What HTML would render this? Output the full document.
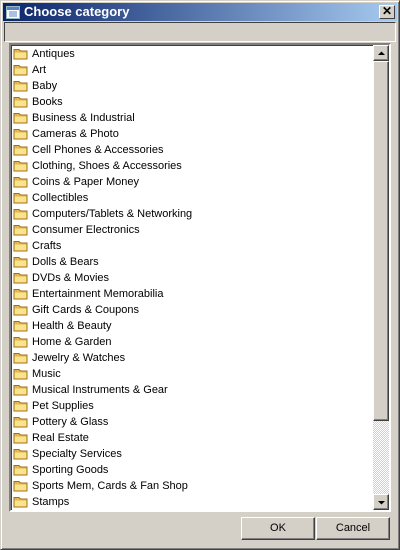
<!DOCTYPE html>
<html><head><style>
*{margin:0;padding:0;box-sizing:border-box}
body{width:400px;height:550px;background:#d4d0c8;font-family:"Liberation Sans",sans-serif;font-size:11px;position:relative;overflow:hidden}
.win{position:absolute;left:0;top:0;width:400px;height:550px;border:1px solid #d4d0c8;border-right-color:#404040;border-bottom-color:#404040;box-shadow:inset 1px 1px #fff,inset -1px -1px #808080}
.title{position:absolute;left:3px;top:3px;width:394px;height:18px;background:linear-gradient(to right,#0a246a,#a6caf0);color:#fff;font-weight:bold;font-size:13px;line-height:18px;padding-left:21px;font-family:"Liberation Sans",sans-serif}
.close{position:absolute;right:5px;top:5px;width:16px;height:14px;background:#d4d0c8;border:1px solid;border-color:#fff #404040 #404040 #fff;font-size:12px;line-height:11px;text-align:center;color:#000;font-weight:bold}
.field{position:absolute;left:4px;top:22px;width:392px;height:20px;border:1px solid;border-color:#404040 #fff #fff #404040}
.list{position:absolute;left:9px;top:43px;width:382px;height:469px;background:#fff;border:2px solid;border-color:#808080 #fff #fff #808080;box-shadow:inset 1px 1px #404040}
.row{position:absolute;height:16px;line-height:16px;font-size:11px;color:#000;white-space:nowrap}
.ico{position:absolute;width:16px;height:14px}
.sb{position:absolute;left:373px;top:45px;width:16px;height:465px;background-color:#e8e6e2;background-image:repeating-conic-gradient(#d4d0c8 0 25%,#fff 0 50%);background-size:2px 2px}
.btn3{position:absolute;background:#d4d0c8;border:1px solid;border-color:#fff #404040 #404040 #fff;box-shadow:inset -1px -1px #808080}
.pb{position:absolute;top:517px;height:23px;width:74px;background:#d4d0c8;border:1px solid;border-color:#fff #404040 #404040 #fff;box-shadow:inset -1px -1px #808080;text-align:center;line-height:21px;font-size:11px}
</style></head><body>
<div class="win"></div>
<div class="title">Choose category</div>
<svg style="position:absolute;left:6px;top:6px" width="14" height="13"><rect x="0.5" y="0.5" width="13" height="12" fill="#fff" stroke="#9bb"/><rect x="1" y="1" width="12" height="3" fill="#5a82c8"/><path d="M3 6h8M3 8h8M3 10h8" stroke="#5a82c8"/></svg>
<div class="close">✕</div>
<div class="field"></div>
<div class="list"></div>
<div class="sb">
<div class="btn3" style="left:0;top:0;width:16px;height:16px"><svg width="14" height="14"><path d="M4 9h7L7.5 5.5z" fill="#000"/></svg></div>
<div class="btn3" style="left:0;top:16px;width:16px;height:360px"></div>
<div class="btn3" style="left:0;top:449px;width:16px;height:16px"><svg width="14" height="14"><path d="M4 6h7L7.5 9.5z" fill="#000"/></svg></div>
</div>
<svg width="0" height="0" style="position:absolute"><defs><g id="f"><path d="M1 3.5h5l1.5 1.5h6.5v8H1z" fill="#e8b84a" stroke="#a07018" stroke-width="1"/><path d="M1.5 6.5h12v6h-12z" fill="#fbe28e"/></g></defs></svg>
<div id="rows"></div>
<script>
var n=["Antiques","Art","Baby","Books","Business & Industrial","Cameras & Photo","Cell Phones & Accessories","Clothing, Shoes & Accessories","Coins & Paper Money","Collectibles","Computers/Tablets & Networking","Consumer Electronics","Crafts","Dolls & Bears","DVDs & Movies","Entertainment Memorabilia","Gift Cards & Coupons","Health & Beauty","Home & Garden","Jewelry & Watches","Music","Musical Instruments & Gear","Pet Supplies","Pottery & Glass","Real Estate","Specialty Services","Sporting Goods","Sports Mem, Cards & Fan Shop","Stamps"];
var h="";n.forEach(function(t,i){var y=45+i*16;h+='<svg class="ico" style="left:13px;top:'+(y+1)+'px" width="16" height="14" viewBox="0 0 16 14"><use href="#f"/></svg><div class="row" style="left:32px;top:'+(y+1)+'px">'+t.replace(/&/g,"&amp;")+'</div>';});
document.getElementById("rows").innerHTML=h;
</script>
<div class="pb" style="left:241px">OK</div>
<div class="pb" style="left:316px">Cancel</div>
</body></html>
